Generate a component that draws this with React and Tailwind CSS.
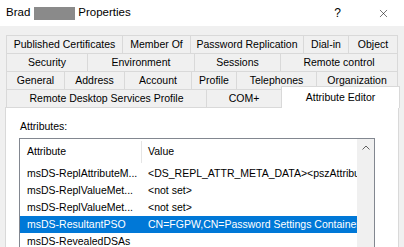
import { X } from "lucide-react";

const ROW1 = [
  ["Published Certificates", "w-[117px]"],
  ["Member Of", "w-[68px]"],
  ["Password Replication", "w-[113px]"],
  ["Dial-in", "w-[45px]"],
  ["Object", "flex-1"],
];
const ROW2 = [
  ["Security", "w-[82px]"],
  ["Environment", "w-[107px]"],
  ["Sessions", "w-[86px]"],
  ["Remote control", "flex-1"],
];
const ROW3 = [
  ["General", "w-[59px]"],
  ["Address", "w-[60px]"],
  ["Account", "w-[67px]"],
  ["Profile", "w-[45px]"],
  ["Telephones", "w-[80px]"],
  ["Organization", "flex-1"],
];

const ATTRS = [
  ["msDS-ReplAttributeM...", "<DS_REPL_ATTR_META_DATA><pszAttributeName>msDS-"],
  ["msDS-ReplValueMet...", "<not set>"],
  ["msDS-ReplValueMet...", "<not set>"],
  ["msDS-ResultantPSO", "CN=FGPW,CN=Password Settings Container,CN=System", true],
  ["msDS-RevealedDSAs", ""],
];

function TabRow({ tabs }) {
  return (
    <div className="flex h-[18px] mx-[1px]">
      {tabs.map(([label, w], i) => (
        <div
          key={label}
          className={`${w} shrink-0 flex items-center justify-center border-t border-r border-[#d9d9d9] ${
            i === 0 ? "border-l" : ""
          }`}
        >
          {label}
        </div>
      ))}
    </div>
  );
}

export default function App() {
  return (
    <div
      className="w-[404px] h-[247px] overflow-hidden bg-[#f0f0f0] flex flex-col text-[10.5px] text-black"
      style={{ fontFamily: "'Liberation Sans', Arial, sans-serif" }}
    >
      {/* ── Title bar ── */}
      <div className="h-[26px] shrink-0 bg-white flex items-center pl-[6px] text-[11.5px]">
        <span>Brad</span>
        <span className="ml-[4px] mr-[3px] w-[41px] h-[13px] bg-[#8a8a8a] blur-[0.6px]" />
        <span>Properties</span>
        <span className="ml-auto text-[12px] mr-[36px]">?</span>
        <X size={13} strokeWidth={1} className="mr-[14px]" />
      </div>

      {/* ── Tabs ── */}
      <div className="flex-1 flex flex-col pt-[9px] px-[5px]">
        <TabRow tabs={ROW1} />
        <TabRow tabs={ROW2} />
        <TabRow tabs={ROW3} />
        <div className="flex h-[18px] mx-[1px]">
          <div className="w-[201px] shrink-0 flex items-center justify-center border-t border-l border-r border-[#d9d9d9]">
            Remote Desktop Services Profile
          </div>
          <div className="w-[75px] shrink-0 flex items-center justify-center border-t border-r border-[#d9d9d9]">
            COM+
          </div>
          <div className="relative z-10 w-[119px] h-[22px] -mt-[3px] -ml-[1px] shrink-0 flex justify-center pt-[3px] bg-white border-t border-l border-r border-[#d9d9d9]">
            Attribute Editor
          </div>
        </div>

        {/* ── Panel ── */}
        <div className="flex-1 bg-white border border-[#d9d9d9] pt-[12px] pl-[13px] pr-[23px]">
          <div className="ml-[1px] leading-[12px]">Attributes:</div>
          <div className="mt-[6px] h-[200px] border border-[#828790] flex">
            <div className="flex-1 flex flex-col overflow-hidden">
              <div className="h-[26px] shrink-0 flex items-center">
                <div className="w-[122px] shrink-0 h-[22px] flex items-center pl-[7px] border-r border-[#e5e5e5]">
                  Attribute
                </div>
                <div className="pl-[6px]">Value</div>
              </div>
              {ATTRS.map(([name, value, sel], i) => (
                <div
                  key={i}
                  className={`h-[17px] shrink-0 flex items-center whitespace-nowrap ${
                    sel ? "bg-[#0078d7] text-white" : ""
                  }`}
                >
                  <div className="w-[122px] shrink-0 pl-[7px]">{name}</div>
                  <div className="pl-[6px]">{value}</div>
                </div>
              ))}
            </div>
            <div className="w-[17px] shrink-0 bg-[#f0f0f0] flex justify-center pt-[6px]">
              <svg width="8" height="5" viewBox="0 0 8 5">
                <path d="M0.5 4.5 L4 1 L7.5 4.5" fill="none" stroke="#606060" strokeWidth="1" />
              </svg>
            </div>
          </div>
        </div>
      </div>
    </div>
  );
}
